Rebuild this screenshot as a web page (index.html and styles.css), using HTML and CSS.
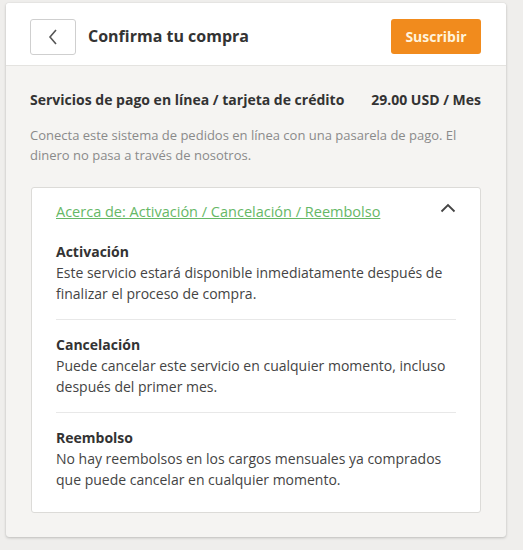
FILE: index.html
```html
<!DOCTYPE html>
<html lang="es">
<head>
<meta charset="utf-8">
<title>Confirma tu compra</title>
<link rel="stylesheet" href="styles.css">
</head>
<body>
<div class="panel">
  <header class="panel-header">
    <button class="back-btn" aria-label="Volver">
      <svg width="12" height="18" viewBox="0 0 12 18"><path d="M9 2 L3 9 L9 16" fill="none" stroke="#555" stroke-width="1.6"/></svg>
    </button>
    <h1 class="title">Confirma tu compra</h1>
    <button class="subscribe-btn">Suscribir</button>
  </header>
  <main class="panel-body">
    <div class="product-row">
      <span class="product-name">Servicios de pago en línea / tarjeta de crédito</span>
      <span class="product-price">29.00 USD / Mes</span>
    </div>
    <p class="description">Conecta este sistema de pedidos en línea con una pasarela de pago. El dinero no pasa a través de nosotros.</p>
    <section class="card">
      <div class="card-head">
        <a class="card-link" href="#">Acerca de: Activación / Cancelación / Reembolso</a>
        <svg class="chevron-up" width="16" height="10" viewBox="0 0 16 10"><path d="M1.5 8.5 L8 2 L14.5 8.5" fill="none" stroke="#444" stroke-width="1.8"/></svg>
      </div>
      <div class="info">
        <h2 class="info-title">Activación</h2>
        <p class="info-text">Este servicio estará disponible inmediatamente después de finalizar el proceso de compra.</p>
      </div>
      <div class="info">
        <h2 class="info-title">Cancelación</h2>
        <p class="info-text">Puede cancelar este servicio en cualquier momento, incluso después del primer mes.</p>
      </div>
      <div class="info">
        <h2 class="info-title">Reembolso</h2>
        <p class="info-text">No hay reembolsos en los cargos mensuales ya comprados que puede cancelar en cualquier momento.</p>
      </div>
    </section>
  </main>
</div>
</body>
</html>
```
FILE: styles.css
```css
* { box-sizing: border-box; }
html, body { margin: 0; padding: 0; }
body {
  background: #efeeec;
  font-family: "Open Sans", "Noto Sans", sans-serif;
  color: #444;
  width: 523px;
  height: 550px;
  overflow: hidden;
}
.panel {
  margin: 3px 0 0 6px;
  width: 500px;
  height: 534px;
  background: #f5f4f2;
  border-radius: 3px;
  box-shadow: 0 1px 3px rgba(0,0,0,0.2), 0 0 1px rgba(0,0,0,0.15);
  display: flex;
  flex-direction: column;
}
.panel-header {
  height: 64px;
  background: #fff;
  border-radius: 3px 3px 0 0;
  border-bottom: 1px solid #e4e3e0;
  display: flex;
  align-items: center;
  padding: 0 25px 0 24px;
}
.back-btn {
  width: 46px;
  height: 36px;
  border: 1px solid #cfcfcf;
  border-radius: 3px;
  background: #fff;
  display: flex;
  align-items: center;
  justify-content: center;
  padding: 0;
  margin-top: 5px;
}
.title {
  margin: 0 0 0 12px;
  font-size: 16px;
  font-weight: 700;
  color: #333;
  flex: 1;
  margin-top: 4px;
}
.subscribe-btn {
  width: 90px;
  height: 35px;
  background: #f18b1d;
  border: none;
  border-radius: 3px;
  color: #fff3dc;
  font-family: "Open Sans", sans-serif;
  font-weight: 700;
  font-size: 14px;
  padding: 0;
  margin-top: 4px;
}
.panel-body {
  padding: 24px 25px 24px 24px;
}
.product-row {
  display: flex;
  justify-content: space-between;
  font-size: 14px;
  font-weight: 700;
  color: #333;
  line-height: 20px;
}
.description {
  margin: 15px 0 0;
  font-size: 13px;
  line-height: 20px;
  color: #8a8a8a;
}
.card {
  margin: 22px 0 0 1px;
  background: #fff;
  border: 1px solid #dcdbd8;
  border-radius: 3px;
  padding: 14px 24px 22px;
}
.card-head {
  display: flex;
  justify-content: space-between;
  align-items: flex-start;
}
.card-link {
  font-size: 14.5px;
  line-height: 20px;
  color: #66b866;
  text-decoration: underline;
}
.chevron-up {
  margin: 1px 0 0 0;
}
.info {
  padding: 15px 0;
  border-bottom: 1px solid #e8e8e8;
}
.card-head + .info { padding-top: 20px; }
.info:last-child { border-bottom: none; padding-bottom: 0; }
.info-title {
  margin: 0;
  font-size: 14px;
  font-weight: 700;
  line-height: 20px;
  color: #333;
}
.info-text {
  margin: 0;
  font-size: 14px;
  line-height: 21px;
  color: #444;
}
```
